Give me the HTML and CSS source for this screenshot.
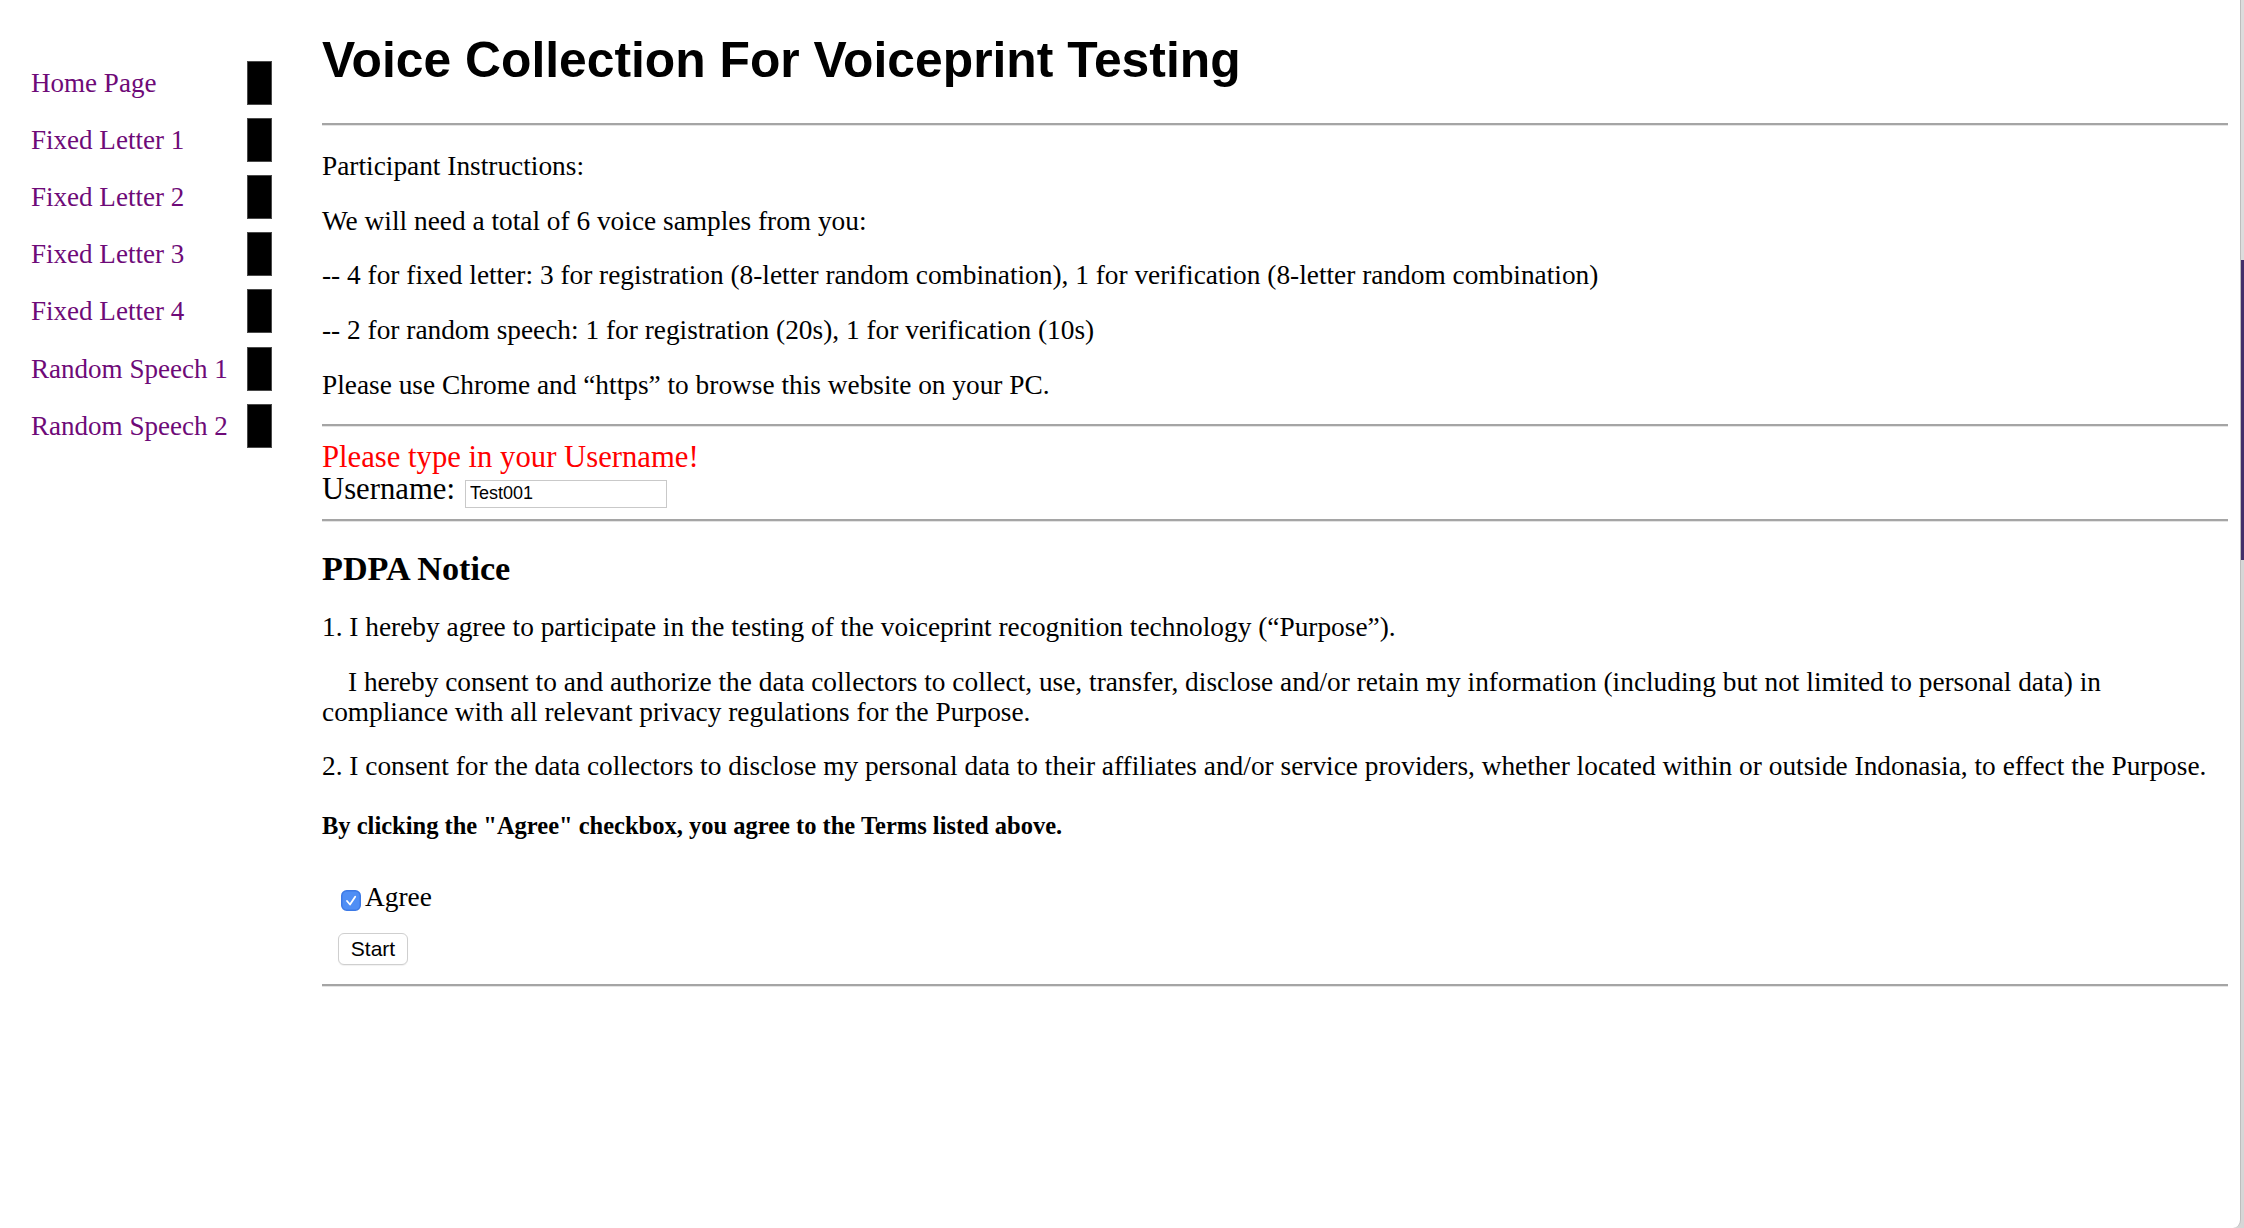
FILE: index.html
```html
<!DOCTYPE html>
<html lang="en">
<head>
<meta charset="utf-8">
<title>Voice Collection For Voiceprint Testing</title>
<link rel="stylesheet" href="styles.css">
</head>
<body>
<div class="page">
  <nav class="side">
    <ul class="side-list">
      <li class="side-item"><a class="side-link" href="#">Home Page</a><span class="side-mark"></span></li>
      <li class="side-item"><a class="side-link" href="#">Fixed Letter 1</a><span class="side-mark"></span></li>
      <li class="side-item"><a class="side-link" href="#">Fixed Letter 2</a><span class="side-mark"></span></li>
      <li class="side-item"><a class="side-link" href="#">Fixed Letter 3</a><span class="side-mark"></span></li>
      <li class="side-item"><a class="side-link" href="#">Fixed Letter 4</a><span class="side-mark"></span></li>
      <li class="side-item"><a class="side-link" href="#">Random Speech 1</a><span class="side-mark"></span></li>
      <li class="side-item"><a class="side-link" href="#">Random Speech 2</a><span class="side-mark"></span></li>
    </ul>
  </nav>

  <main class="main">
    <h1 class="title">Voice Collection For Voiceprint Testing</h1>
    <hr class="rule rule-top">

    <section class="instructions">
      <p class="para">Participant Instructions:</p>
      <p class="para">We will need a total of 6 voice samples from you:</p>
      <p class="para">-- 4 for fixed letter: 3 for registration (8-letter random combination), 1 for verification (8-letter random combination)</p>
      <p class="para">-- 2 for random speech: 1 for registration (20s), 1 for verification (10s)</p>
      <p class="para">Please use Chrome and “https” to browse this website on your PC.</p>
    </section>

    <hr class="rule">

    <form class="user-form">
      <div class="warn">Please type in your Username!</div>
      <div class="user-row">
        <label class="user-label" for="username">Username:</label>
        <input class="user-input" id="username" type="text" value="Test001">
      </div>
    </form>

    <hr class="rule">

    <section class="pdpa">
      <h3 class="pdpa-title">PDPA Notice</h3>
      <p class="para">1. I hereby agree to participate in the testing of the voiceprint recognition technology (“Purpose”).</p>
      <p class="para indent">I hereby consent to and authorize the data collectors to collect, use, transfer, disclose and/or retain my information (including but not limited to personal data) in compliance with all relevant privacy regulations for the Purpose.</p>
      <p class="para">2. I consent for the data collectors to disclose my personal data to their affiliates and/or service providers, whether located within or outside Indonasia, to effect the Purpose.</p>
      <h5 class="terms">By clicking the "Agree" checkbox, you agree to the Terms listed above.</h5>

      <label class="agree">
        <span class="check" aria-hidden="true">
          <svg width="20" height="21" viewBox="0 0 20 21">
            <rect x="0.75" y="0.75" width="18.5" height="19.5" rx="5" ry="5" fill="#4f8ef5" stroke="#3c79e6" stroke-width="1.5"/>
            <path d="M6 11 L9 14.5 L14.2 6.8" fill="none" stroke="#ffffff" stroke-width="1.8" stroke-linecap="round" stroke-linejoin="round"/>
          </svg>
        </span>
        <span class="agree-text">Agree</span>
      </label>

      <button class="start-btn" type="button">Start</button>
    </section>

    <hr class="rule rule-bottom">
  </main>
</div>
</body>
</html>
```
FILE: styles.css
```css
html {
  background: linear-gradient(#dcdcdc 0 260px, #43306a 260px 560px, #d6d6d6 560px 100%);
}

body {
  margin: 0 3px 0 0;
  min-height: 100vh;
  background: #ffffff;
  border-right: 1px solid #bdbdbd;
  border-bottom-right-radius: 8px;
  color: #000;
  font-family: "Liberation Serif", "Times New Roman", serif;
  font-size: 27.35px;
}

.page {
  display: flex;
  align-items: flex-start;
}

/* ---------- side navigation ---------- */
.side {
  flex: 0 0 322px;
  box-sizing: border-box;
  padding: 54px 0 0 31px;
}

.side-list {
  list-style: none;
  margin: 0;
  padding: 0;
}

.side-item {
  height: 57.2px;
  display: grid;
  grid-template-columns: 216px 25px;
  align-items: center;
}

.side-link {
  color: #6e0a78;
  text-decoration: none;
  font-size: 27.05px;
  line-height: 30px;
  white-space: nowrap;
}

.side-mark {
  display: block;
  width: 25px;
  height: 44px;
  box-sizing: border-box;
  background: #000;
  border: 1px solid #4a4a4a;
}

/* ---------- main column ---------- */
.main {
  flex: 1 1 auto;
  min-width: 0;
  padding-right: 12px;
}

.title {
  margin: 31px 0 0;
  font-family: "Liberation Sans", Arial, sans-serif;
  font-weight: bold;
  font-size: 49.8px;
  line-height: 58px;
}

.rule {
  height: 0;
  margin: 0;
  border: 0;
  border-top: 2px solid #a5a5a5;
  border-bottom: 1px solid #e4e4e4;
}

.rule-top {
  margin-top: 34px;
}

.para {
  margin: 24.8px 0;
  line-height: 30px;
}

.indent {
  text-indent: 26px;
}

.instructions .para:last-child {
  margin-bottom: 24.5px;
}

/* ---------- username form ---------- */
.user-form {
  margin: 14px 0 11px;
  font-size: 30.7px;
  line-height: 31px;
}

.warn {
  color: #ff0000;
  line-height: 33px;
}

.user-row {
  display: flex;
  align-items: baseline;
  gap: 10px;
}

.user-input {
  box-sizing: border-box;
  width: 202px;
  height: 28px;
  margin: 0;
  padding: 0 4px;
  border: 1px solid #c9c9c9;
  border-radius: 0;
  background: #fff;
  font-family: "Liberation Sans", Arial, sans-serif;
  font-size: 18px;
  color: #000;
}

/* ---------- PDPA ---------- */
.pdpa-title {
  margin: 27px 0 0;
  font-size: 34.2px;
  line-height: 39px;
  font-weight: bold;
}

.pdpa .para {
  margin: 24.5px 0;
}

.terms {
  margin: 30.5px 0 0;
  font-size: 24.5px;
  line-height: 28px;
  font-weight: bold;
}

.agree {
  display: flex;
  align-items: flex-start;
  gap: 4px;
  margin: 42.3px 0 0 19px;
  line-height: 30px;
}

.check {
  display: block;
  width: 20px;
  height: 21px;
  margin-top: 8px;
}

.check svg {
  display: block;
}

.start-btn {
  display: block;
  box-sizing: border-box;
  width: 70px;
  height: 32px;
  margin: 21px 0 0 16px;
  padding: 0;
  background: #ffffff;
  border: 1px solid #cfcfcf;
  border-radius: 6px;
  box-shadow: 0 1px 1px rgba(0, 0, 0, 0.06);
  font-family: "Liberation Sans", Arial, sans-serif;
  font-size: 21px;
  color: #000;
}

.rule-bottom {
  margin-top: 19px;
}
```
